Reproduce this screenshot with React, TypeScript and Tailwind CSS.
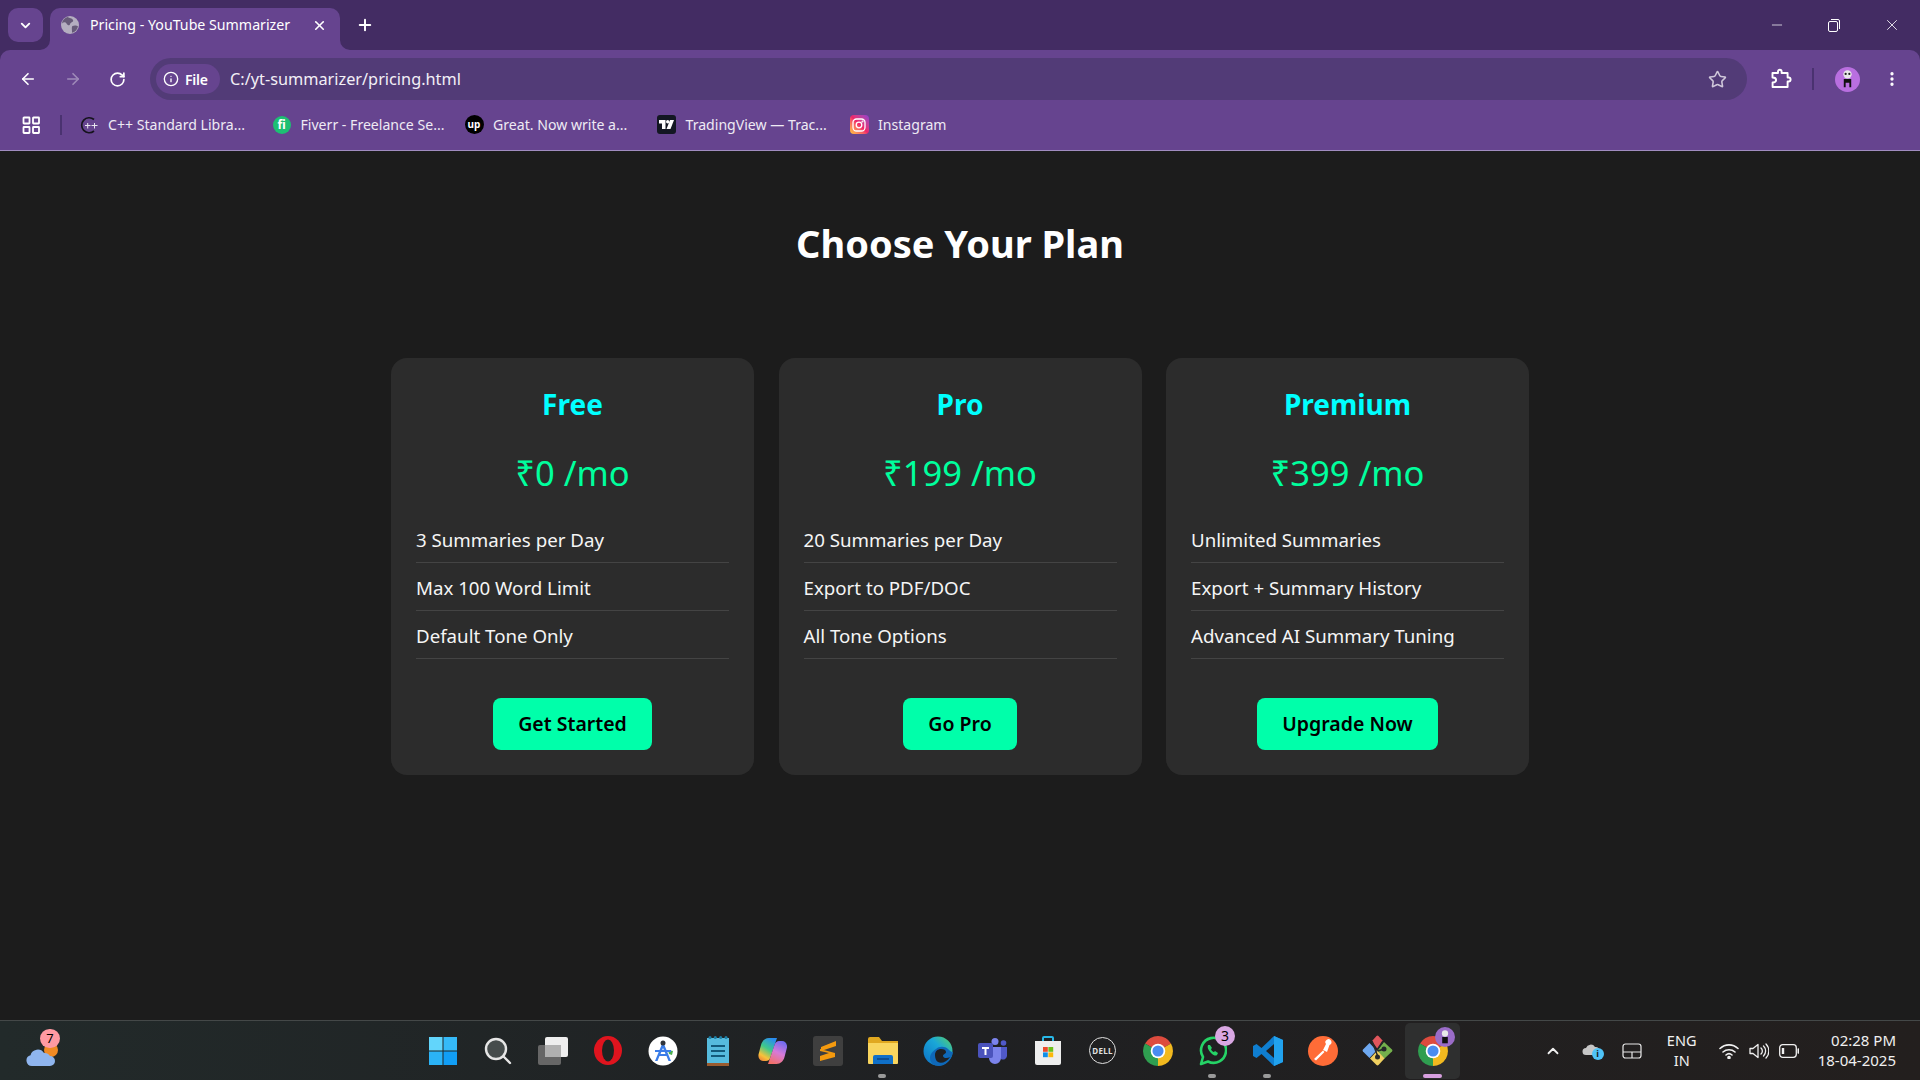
import React from "react";
import { ArrowLeft, ArrowRight, RotateCw, Info, Star, EllipsisVertical, ChevronDown, ChevronUp, X, Plus, Minus } from "lucide-react";

const plans = [
  { name: "Free", price: "₹0 /mo", feats: ["3 Summaries per Day", "Max 100 Word Limit", "Default Tone Only"], cta: "Get Started" },
  { name: "Pro", price: "₹199 /mo", feats: ["20 Summaries per Day", "Export to PDF/DOC", "All Tone Options"], cta: "Go Pro" },
  { name: "Premium", price: "₹399 /mo", feats: ["Unlimited Summaries", "Export + Summary History", "Advanced AI Summary Tuning"], cta: "Upgrade Now" },
];

function Globe() {
  return (
    <svg width="18" height="18" viewBox="0 0 18 18">
      <circle cx="9" cy="9" r="9" fill="#b4aec0" />
      <path d="M6.5 1c2 1.2 4.5 1 5.5 3s-2.5 2.2-3 4.2-2.5 1-3.5-.7S2.500 6.200 1 7.500C1.300 4.500 3.500 2 6.500 1zM11.500 10c2-1 4.500-.5 5.500.5-.8 3.200-3 5.800-6 6.300.3-2.200-.8-5.600.5-6.800z" fill="#665a78" />
    </svg>
  );
}

function Bookmark({ icon, label }: { icon: React.ReactNode; label: string }) {
  return (
    <div className="flex items-center gap-[9px] w-[192.5px]">
      <span className="w-[20px] h-[20px] shrink-0 flex items-center justify-center">{icon}</span>
      <span className="text-[14.1px] text-[#eeeaf4] whitespace-nowrap">{label}</span>
    </div>
  );
}

function TabStrip() {
  return (
    <div className="h-[50px] bg-[#432c63] flex items-start text-white relative">
      <div className="ml-[8px] mt-2 w-[35px] h-[34px] rounded-[10px] bg-[#66448f] flex items-center justify-center">
        <ChevronDown size={15} strokeWidth={3} />
      </div>
      <div className="relative ml-[7px] mt-2 h-[42px] w-[290px] bg-[#66448f] rounded-t-[10px] flex items-center pl-[11px] pr-[13px] pb-[8px]">
        <svg width="10" height="10" viewBox="0 0 10 10" className="absolute left-[-10px] bottom-0"><path d="M10 0v10H0a10 10 0 0 0 10-10z" fill="#66448f" /></svg>
        <svg width="10" height="10" viewBox="0 0 10 10" className="absolute right-[-10px] bottom-0"><path d="M0 0v10h10A10 10 0 0 1 0 0z" fill="#66448f" /></svg>
        <Globe />
        <span className="ml-[11px] text-[14.2px] flex-1 whitespace-nowrap">Pricing - YouTube Summarizer</span>
        <X size={15} strokeWidth={2.6} />
      </div>
      <div className="ml-[16px] mt-[16px]">
        <Plus size={18} strokeWidth={2.6} />
      </div>
      <div className="ml-auto flex items-center mt-[16px] pr-[19px] gap-[41px]">
        <Minus size={16} strokeWidth={1.1} />
        <svg width="16" height="16" viewBox="0 0 16 16" fill="none" stroke="white" strokeWidth="1">
          <rect x="2.500" y="4.500" width="9" height="10" rx="1.500" />
          <path d="M5 2.500h7a1.500 1.500 0 0 1 1.500 1.500v8" />
        </svg>
        <X size={18} strokeWidth={1.1} />
      </div>
    </div>
  );
}

function Toolbar() {
  return (
    <div className="h-[58px] bg-[#66448f] flex items-center text-white rounded-t-[10px]">
      <div className="w-[150px] pl-[19px] flex items-center gap-[27px] shrink-0">
        <ArrowLeft size={18} strokeWidth={2.2} />
        <ArrowRight size={18} strokeWidth={2.2} className="text-[#9f8ab9]" />
        <RotateCw size={17} strokeWidth={2.4} />
      </div>
      <div className="w-[1597px] h-[42px] rounded-full bg-[#523b77] flex items-center pl-[6px] pr-[20px]">
        <div className="h-[30px] w-[64px] rounded-full bg-[#66448f] flex items-center pl-[7px] gap-[6px]">
          <Info size={16} strokeWidth={2} />
          <span className="text-[14px] font-semibold tracking-[-0.2px]">File</span>
        </div>
        <span className="ml-[10px] text-[16.3px] text-[#f2eff6]">C:/yt-summarizer/pricing.html</span>
        <Star size={19} strokeWidth={2} className="ml-auto text-[#cfc7da]" />
      </div>
      <svg width="22" height="22" viewBox="0 0 22 22" fill="none" stroke="white" strokeWidth="1.9" strokeLinejoin="round" className="ml-[23px]">
        <path d="M2.500 5H8V3.500a1.800 1.800 0 0 1 3.600 0V5h6v4.500h1a2 2 0 0 1 0 4h-1V19h-15v-4.500c2.500 0 3.500-1 3.500-2.500S5 9.500 2.500 9.500z" />
      </svg>
      <div className="ml-[20px] w-[2px] h-[22px] bg-[#4a3270]" />
      <div className="ml-[21px] w-[25px] h-[25px] rounded-full bg-[#b96fe0] flex items-center justify-center">
        <svg width="13" height="20" viewBox="0 0 14 20">
          <circle cx="7" cy="5" r="4.500" fill="#e8e8e8" />
          <circle cx="5" cy="4.500" r="1.200" fill="#222" />
          <circle cx="9" cy="4.500" r="1.200" fill="#222" />
          <path d="M3 10h8v9H9v-5H5v5H3z" fill="#111" />
        </svg>
      </div>
      <EllipsisVertical size={18} strokeWidth={2.4} className="ml-[23px]" />
    </div>
  );
}

function Bookmarks() {
  return (
    <div className="h-[43px] bg-[#66448f] border-b border-[#a08cc0] flex items-center pl-[22px] pb-[8px]">
      <svg width="19" height="19" viewBox="0 0 19 19" fill="none" stroke="white" strokeWidth="1.800">
        <rect x="1.500" y="1.500" width="6" height="6" rx="0.500" />
        <rect x="11" y="1.500" width="6" height="6" rx="0.500" />
        <rect x="1.500" y="11" width="6" height="6" rx="0.500" />
        <rect x="11" y="11" width="6" height="6" rx="0.500" />
      </svg>
      <div className="ml-[19px] mr-[17px] w-[2px] h-[20px] bg-[#4a3270]" />
      <Bookmark label="C++ Standard Libra..." icon={
        <svg width="20" height="20" viewBox="0 0 20 20" fill="none" stroke="#15131c" strokeWidth="1.700">
          <path d="M15 4.500A7.500 7.500 0 1 0 15 16" />
          <path d="M6 10.500h5.500M8.700 8v5.500M12.500 10.500h6M15.500 8v5.500" stroke="#e8e6ee" strokeWidth="1" />
        </svg>
      } />
      <Bookmark label="Fiverr - Freelance Se..." icon={
        <span className="w-[18px] h-[18px] rounded-full bg-[#1dbf73] flex items-center justify-center text-white text-[12px] font-bold">fi</span>
      } />
      <Bookmark label="Great. Now write a..." icon={
        <span className="w-[19px] h-[19px] rounded-full bg-black flex items-center justify-center text-white text-[10px] font-bold">up</span>
      } />
      <Bookmark label="TradingView — Trac..." icon={
        <span className="w-[19px] h-[19px] rounded-[3px] bg-[#131722] flex items-center justify-center">
          <svg width="15" height="9" viewBox="0 0 15 9" fill="white"><path d="M0 0h6.500v9H3V3.500H0z" /><circle cx="8.700" cy="1.700" r="1.700" /><path d="M11 0h4l-3.500 9H7.500z" /></svg>
        </span>
      } />
      <Bookmark label="Instagram" icon={
        <span className="w-[19px] h-[19px] rounded-[4px] bg-gradient-to-tr from-[#ffc531] via-[#f0246a] to-[#8d3ad0] flex items-center justify-center">
          <svg width="14" height="14" viewBox="0 0 14 14" fill="none" stroke="white" strokeWidth="1.300">
            <rect x="1" y="1" width="12" height="12" rx="3.500" />
            <circle cx="7" cy="7" r="2.800" />
            <circle cx="10.500" cy="3.500" r="0.400" />
          </svg>
        </span>
      } />
    </div>
  );
}

function Card({ plan }: { plan: (typeof plans)[number] }) {
  return (
    <div className="w-[363px] h-[417px] bg-[#2c2c2c] rounded-[16px] px-[25px] pt-[26px] flex flex-col items-center">
      <h2 className="text-[28px] leading-[40px] font-bold text-[#00ffff]">{plan.name}</h2>
      <div className="mt-[25px] text-[34.5px] leading-[48px] text-[#00ff9d]">{plan.price}</div>
      <ul className="mt-[18px] w-full text-[18.7px] text-[#f5f5f5]">
        {plan.feats.map((f) => (
          <li key={f} className="h-[48px] pt-[4px] border-b border-[#444444] flex items-center">{f}</li>
        ))}
      </ul>
      <button className="mt-[39px] h-[52px] px-[25px] rounded-[8px] bg-[#00ffaa] text-black text-[19.5px] font-semibold">{plan.cta}</button>
    </div>
  );
}

function Main() {
  return (
    <main className="flex-1 bg-[#1c1c1c] flex flex-col items-center pt-[67px]">
      <h1 className="text-[38px] leading-[50px] font-bold text-white">Choose Your Plan</h1>
      <div className="mt-[90px] flex gap-[24.5px]">
        {plans.map((p) => <Card key={p.name} plan={p} />)}
      </div>
    </main>
  );
}

function TIcon({ children, dot, active }: { children: React.ReactNode; dot?: "gray" | "pink"; active?: boolean }) {
  return (
    <div className={`relative w-[55px] h-[56px] flex items-center justify-center rounded-[5px] ${active ? "bg-[#2e2f2f]" : ""}`}>
      {children}
      {dot === "gray" && <span className="absolute bottom-[1px] left-[23px] w-[8px] h-[4px] rounded-full bg-[#9a9a9a]" />}
      {dot === "pink" && <span className="absolute bottom-[1px] left-[18px] w-[19px] h-[4px] rounded-full bg-[#d8a0e0]" />}
    </div>
  );
}

function Chrome({ size = 30 }: { size?: number }) {
  return (
    <svg width={size} height={size} viewBox="0 0 28 28">
      <path d="M14 14L1.900 7A14 14 0 0 1 26.100 7z" fill="#dd4b3e" />
      <path d="M14 14L26.100 7A14 14 0 0 1 14 28z" fill="#f2b91f" />
      <path d="M14 14L14 28A14 14 0 0 1 1.900 7z" fill="#2f9e50" />
      <circle cx="14" cy="14" r="6.800" fill="white" />
      <circle cx="14" cy="14" r="5.200" fill="#4a8cf0" />
    </svg>
  );
}

function Badge({ children, cls }: { children: React.ReactNode; cls: string }) {
  return <span className={`absolute rounded-full flex items-center justify-center text-black ${cls}`}>{children}</span>;
}

function Taskbar() {
  return (
    <div className="h-[60px] shrink-0 border-t border-[#444848] bg-gradient-to-r from-[#222a2a] via-[#1f2022] to-[#231f1e] flex items-center relative">
      <div className="absolute left-[26px] top-[8px] w-[36px] h-[40px]">
        <span className="absolute left-[18px] top-[14px] w-[14px] h-[14px] rounded-full bg-[#f08a24]" />
        <svg width="30" height="20" viewBox="0 0 30 20" className="absolute left-0 top-[17px]">
          <path d="M6 20a5.500 5.500 0 0 1-1.500-10.800A7.500 7.500 0 0 1 18 7a6.500 6.500 0 0 1 6 3 5 5 0 0 1 0 10z" fill="#8fb5ee" />
        </svg>
        <Badge cls="left-[14px] top-0 w-[20px] h-[19px] bg-[#ff9aa2] text-[13px]">7</Badge>
      </div>
      <div className="ml-[415px] flex items-center">
        <TIcon>
          <svg width="30" height="30" viewBox="0 0 30 30">
            <rect x="1" y="1" width="13.500" height="13.500" fill="#62d5fb" />
            <rect x="15.500" y="1" width="13.500" height="13.500" fill="#35baf8" />
            <rect x="1" y="15.500" width="13.500" height="13.500" fill="#2bb3f6" />
            <rect x="15.500" y="15.500" width="13.500" height="13.500" fill="#119ef5" />
          </svg>
        </TIcon>
        <TIcon>
          <svg width="28" height="28" viewBox="0 0 28 28" fill="#464c4c" stroke="#e6e6e6" strokeWidth="2.400" strokeLinecap="round">
            <circle cx="12" cy="12" r="10" />
            <path d="M19.500 19.500L26 26" />
          </svg>
        </TIcon>
        <TIcon>
          <svg width="30" height="28" viewBox="0 0 30 28">
            <rect x="0" y="8" width="23" height="20" rx="2" fill="#666666" />
            <rect x="7" y="0" width="23" height="20" rx="2" fill="#eeeeee" />
            <rect x="7" y="8" width="16" height="12" fill="#b0b0b0" />
          </svg>
        </TIcon>
        <TIcon>
          <svg width="28" height="29" viewBox="0 0 28 29">
            <ellipse cx="14" cy="14.500" rx="14" ry="14.500" fill="#e0141e" />
            <ellipse cx="14" cy="14.500" rx="6" ry="11" fill="#1f2322" />
          </svg>
        </TIcon>
        <TIcon>
          <svg width="30" height="30" viewBox="0 0 30 30">
            <circle cx="15" cy="15" r="14.500" fill="white" />
            <path d="M20 14l5 1-1 4-3-1z" fill="#4caf50" />
            <path d="M14 8h2l7 17h-2.500l-2-5h-7l-2 5H7zM15 12l-2.500 6h5z" fill="#3b7de8" />
            <path d="M7 14h16v2H7z" fill="#3b7de8" />
            <circle cx="15" cy="7" r="2.500" fill="#30343a" />
          </svg>
        </TIcon>
        <TIcon>
          <svg width="22" height="30" viewBox="0 0 22 30">
            <rect x="0" y="2" width="22" height="25" fill="#56bbdd" />
            <rect x="0" y="27" width="22" height="3" fill="#9a5b2f" />
            <circle cx="3" cy="1.500" r="1.500" fill="#1c7ea5" />
            <circle cx="8.300" cy="1.500" r="1.500" fill="#1c7ea5" />
            <circle cx="13.700" cy="1.500" r="1.500" fill="#1c7ea5" />
            <circle cx="19" cy="1.500" r="1.500" fill="#1c7ea5" />
            <path d="M4 9h14v2H4zM4 14h14v2H4zM4 19h14v2H4z" fill="#135a7a" />
          </svg>
        </TIcon>
        <TIcon>
          <svg width="29" height="28" viewBox="0 0 29 28">
            <defs>
              <linearGradient id="cpa" x1="0.700" y1="0" x2="0.200" y2="1">
                <stop offset="0" stopColor="#2a8cf0" /><stop offset="0.450" stopColor="#3fc98a" /><stop offset="0.800" stopColor="#f8c23a" /><stop offset="1" stopColor="#f08a3a" />
              </linearGradient>
              <linearGradient id="cpb" x1="0.700" y1="0" x2="0.300" y2="1">
                <stop offset="0" stopColor="#6f6cf0" /><stop offset="0.500" stopColor="#d77ad8" /><stop offset="1" stopColor="#f2706a" />
              </linearGradient>
            </defs>
            <path d="M11 1h8l-6.500 19c-1 3-2.500 4-4.500 4H5c-3 0-5-3-4.500-6.500L3 8c1-4 4-7 8-7z" fill="url(#cpa)" />
            <path d="M18 27h-8l6.500-19c1-3 2.500-4 4.500-4h3c3 0 5.500 3 5 6.500l-2.500 9.500c-1 4-4 7-8 7z" fill="url(#cpb)" />
          </svg>
        </TIcon>
        <TIcon>
          <span className="w-[30px] h-[30px] rounded-[3px] bg-[#3f3f3f] flex items-center justify-center">
            <svg width="16" height="20" viewBox="0 0 16 20"><path d="M16 0v5L1 10V6zM0 8l15 4v4L0 20v-5l9-3-9-2z" fill="#f59a0e" /></svg>
          </span>
        </TIcon>
        <TIcon dot="gray">
          <svg width="30" height="28" viewBox="0 0 30 28">
            <path d="M0 2a2 2 0 0 1 2-2h9l3 4h16v22H0z" fill="#e0a820" />
            <path d="M0 6h30v20a1 1 0 0 1-1 1H1a1 1 0 0 1-1-1z" fill="#f8d55e" />
            <path d="M5 27v-7a2 2 0 0 1 2-2h16a2 2 0 0 1 2 2v7z" fill="#1070c8" />
            <rect x="9" y="21" width="12" height="2" fill="#0a4f95" />
          </svg>
        </TIcon>
        <TIcon>
          <svg width="30" height="30" viewBox="0 0 30 30">
            <defs>
              <linearGradient id="edg" x1="0" y1="1" x2="1" y2="0">
                <stop offset="0" stopColor="#0c6fc4" /><stop offset="0.600" stopColor="#1aa7d8" /><stop offset="1" stopColor="#5cd25e" />
              </linearGradient>
            </defs>
            <circle cx="15" cy="15" r="14.500" fill="url(#edg)" />
            <path d="M13 13c3-3 9-3 12 0s4 3 5 3c-1 8-8 14-14 14-5 0-9-3-9-8 0-4 3-7 6-9z" fill="#0f68b8" />
            <path d="M12 19c0-4 3-6 6-6 3 0 5 1 5 3s-3 2-3 4c0 2 4 3 7 1-3 5-9 7-12 5-2-1-3-4-3-7z" fill="#1f2022" />
          </svg>
        </TIcon>
        <TIcon>
          <svg width="30" height="26" viewBox="0 0 30 26">
            <circle cx="17" cy="3.500" r="3.500" fill="#7b83eb" />
            <circle cx="25.500" cy="5" r="2.800" fill="#5059c9" />
            <path d="M21 9h8v9a4 4 0 0 1-6 3z" fill="#5059c9" />
            <path d="M9 9h14v11a6 6 0 0 1-12 0z" fill="#7b83eb" />
            <rect x="0" y="5" width="15" height="15" rx="2" fill="#4b53bc" />
            <path d="M4 9h7v2H8.500v6h-2v-6H4z" fill="white" />
          </svg>
        </TIcon>
        <TIcon>
          <svg width="28" height="30" viewBox="0 0 28 30">
            <path d="M9 5V2a1 1 0 0 1 1-1h8a1 1 0 0 1 1 1v3" fill="none" stroke="#28b8e8" strokeWidth="2" />
            <path d="M1 5h26v22a2 2 0 0 1-2 2H3a2 2 0 0 1-2-2z" fill="#eeeeee" />
            <rect x="9" y="11" width="4.800" height="4.800" fill="#ea4a2c" />
            <rect x="14.400" y="11" width="4.800" height="4.800" fill="#6cc01c" />
            <rect x="9" y="16.400" width="4.800" height="4.800" fill="#0f8ee8" />
            <rect x="14.400" y="16.400" width="4.800" height="4.800" fill="#fbb80a" />
          </svg>
        </TIcon>
        <TIcon>
          <span className="w-[27px] h-[27px] rounded-full border-[1.5px] border-[#e0e0e0] flex items-center justify-center text-[8px] font-bold text-[#e0e0e0] tracking-[0.3px]">DELL</span>
        </TIcon>
        <TIcon><Chrome /></TIcon>
        <TIcon dot="gray">
          <svg width="28" height="30" viewBox="0 0 28 30" fill="none">
            <path d="M2 28l2-7A12.500 12.500 0 1 1 9 25.500z" stroke="#25d366" strokeWidth="2.600" strokeLinejoin="round" />
            <path d="M9 9c-1 2 0 5 3 8s5 3 6 2l1-2-3-2-1 1c-1 0-3-2-3-3l1-1-2-3z" fill="#25d366" />
          </svg>
          <Badge cls="left-[30px] top-[3px] w-[20px] h-[20px] bg-[#d9a7e3] text-[14px]">3</Badge>
        </TIcon>
        <TIcon dot="gray">
          <svg width="30" height="30" viewBox="0 0 30 30">
            <path d="M21 0l9 4v22l-9 4L8.500 18l-5 4L0 20v-10l3.500-2 5 4z" fill="#0f7ed0" />
            <path d="M21 0l9 4v22l-9 4z" fill="#21a2ee" />
            <path d="M21 8l-8 7 8 7z" fill="#1f2022" />
          </svg>
        </TIcon>
        <TIcon>
          <svg width="30" height="30" viewBox="0 0 30 30">
            <circle cx="15" cy="15" r="15" fill="#ff6c37" />
            <path d="M6 23l9-8.500 1.500 1.500L8 24.500zM15 14l3-6a3 3 0 1 1 3.500 1L19 16z" fill="white" />
          </svg>
        </TIcon>
        <TIcon>
          <svg width="31" height="31" viewBox="0 0 31 31">
            <path d="M14.500 1a1.500 1.500 0 0 1 2 0L21 6l-5.500 8L10 6z" fill="#e0565c" />
            <path d="M30 14.500a1.500 1.500 0 0 1 0 2L22 24l-6.500-8.500L22 7z" fill="#74b04c" />
            <path d="M16.500 30a1.500 1.500 0 0 1-2 0L8 23.500l7.500-8L22.500 23.500z" fill="#f0d060" />
            <path d="M1 16.500a1.500 1.500 0 0 1 0-2L7.500 8l7 7.500L7.500 23z" fill="#6ea8f0" />
            <path d="M10 6l6 16M21 6l-6 9M15.500 16l7-2" stroke="#26282a" strokeWidth="1.500" />
            <circle cx="22" cy="14" r="2.500" fill="#26282a" />
            <circle cx="15.500" cy="22" r="2.500" fill="#26282a" />
          </svg>
        </TIcon>
        <TIcon active dot="pink">
          <Chrome />
          <span className="absolute left-[30px] top-[4px] w-[20px] h-[20px] rounded-full bg-[#9a6cc8] flex items-center justify-center">
            <svg width="10" height="14" viewBox="0 0 14 20">
              <circle cx="7" cy="5" r="4.500" fill="#e8e8e8" />
              <path d="M3 10h8v9H3z" fill="#111" />
            </svg>
          </span>
        </TIcon>
      </div>
      <div className="ml-auto flex items-center text-[#f0f0f0]">
        <ChevronUp size={18} strokeWidth={2.4} className="mr-[20px]" />
        <div className="relative w-[22px] h-[18px] mr-[18px]">
          <svg width="18" height="12" viewBox="0 0 18 12" className="absolute left-0 top-[1px]">
            <path d="M4 12a3.500 3.500 0 0 1 0-7 5 5 0 0 1 9-1 4 4 0 0 1 1 8z" fill="#c6c6c6" />
          </svg>
          <span className="absolute left-[10px] top-[6px] w-[12px] h-[12px] rounded-full bg-[#4fc3f7] text-[9px] leading-[12px] text-center font-bold text-[#1a1a1a]">i</span>
        </div>
        <svg width="20" height="16" viewBox="0 0 20 16" fill="none" stroke="#e8e8e8" strokeWidth="1.200" className="mr-[22px]">
          <rect x="1" y="1" width="18" height="14" rx="2.500" />
          <path d="M1 9h18M10 9v6" />
        </svg>
        <div className="w-[36px] text-center text-[14.5px] leading-[20px] mr-[19px] pb-[2px]">ENG<br />IN</div>
        <svg width="20" height="16" viewBox="0 0 20 16" fill="none" stroke="#f0f0f0" strokeWidth="1.600" strokeLinecap="round" className="mr-[10px]">
          <path d="M1 5.500a13 13 0 0 1 18 0M4 9a9 9 0 0 1 12 0M7 12a4.500 4.500 0 0 1 6 0" />
          <circle cx="10" cy="14.500" r="1" fill="#f0f0f0" />
        </svg>
        <svg width="20" height="18" viewBox="0 0 20 18" fill="none" stroke="#f0f0f0" strokeWidth="1.300" className="mr-[10px]">
          <path d="M1 6.500h3L9 2.500v13L4 11.500H1z" strokeLinejoin="round" />
          <path d="M12 6a4 4 0 0 1 0 6M14.500 4a7 7 0 0 1 0 10M17 2a10 10 0 0 1 0 14" strokeLinecap="round" />
        </svg>
        <svg width="20" height="14" viewBox="0 0 20 14" fill="none" stroke="#f0f0f0" strokeWidth="1.300" className="mr-[19px]">
          <rect x="0.700" y="0.700" width="16.600" height="12.600" rx="3" />
          <path d="M4 4v6" strokeWidth="2.400" />
          <path d="M19.300 5v4" strokeWidth="1.600" strokeLinecap="round" />
        </svg>
        <div className="text-right text-[15px] leading-[20px] pr-[24px] pb-[2px] whitespace-nowrap">02:28 PM<br />18-04-2025</div>
      </div>
    </div>
  );
}

export default function App() {
  return (
    <div className="w-[1920px] h-[1080px] flex flex-col overflow-hidden font-['Noto_Sans','Open_Sans',sans-serif]">
      <div className="shrink-0 bg-[#432c63]">
        <TabStrip />
        <Toolbar />
        <Bookmarks />
      </div>
      <Main />
      <Taskbar />
    </div>
  );
}
